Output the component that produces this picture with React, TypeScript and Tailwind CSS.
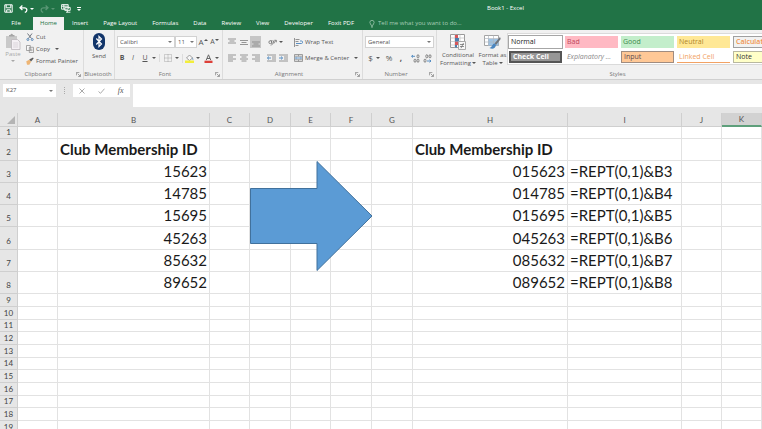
import type { ReactNode } from 'react';
import clsx from 'clsx';

const tabs = ['File', 'Home', 'Insert', 'Page Layout', 'Formulas', 'Data', 'Review', 'View', 'Developer', 'Foxit PDF'];

const cellStyles = [
  { label: 'Normal', className: 'bg-white text-[#222] outline outline-[#a6a6a6]' },
  { label: 'Bad', className: 'bg-[#ffb9c3] text-[#c0485a]' },
  { label: 'Good', className: 'bg-[#c3eecb] text-[#3f8a4c]' },
  { label: 'Neutral', className: 'bg-[#ffe896] text-[#b0852a]' },
  { label: 'Calculation', className: 'bg-[#f2f2f2] text-[#f0924a] border border-[#a0a0a0] font-semibold' },
  { label: 'Check Cell', className: 'bg-[#969696] text-white border-2 border-double border-[#555] font-bold' },
  { label: 'Explanatory ...', className: 'bg-white text-[#8a8a8a] italic' },
  { label: 'Input', className: 'bg-[#ffc896] text-[#5b4a50] border border-[#a08c80]' },
  { label: 'Linked Cell', className: 'bg-white text-[#f2a264] border-b border-[#f2a264]' },
  { label: 'Note', className: 'bg-[#ffffc8] text-[#333] border border-[#b8b8a0]' },
];

const columns = [
  { name: 'A', width: 40 },
  { name: 'B', width: 152 },
  { name: 'C', width: 40 },
  { name: 'D', width: 41 },
  { name: 'E', width: 40 },
  { name: 'F', width: 41 },
  { name: 'G', width: 41 },
  { name: 'H', width: 155 },
  { name: 'I', width: 114 },
  { name: 'J', width: 40 },
  { name: 'K', width: undefined },
];

const rowHeights = [12, 22, 22, 22, 22, 23, 22, 22, 13, 13, 12, 13, 13, 12, 13, 13, 12, 13, 13];

const cells: Record<string, string> = {
  B2: 'Club Membership ID',
  H2: 'Club Membership ID',
};

['15623', '14785', '15695', '45263', '85632', '89652'].forEach((id, i) => {
  const row = i + 3;
  cells[`B${row}`] = id;
  cells[`H${row}`] = `0${id}`;
  cells[`I${row}`] = `=REPT(0,1)&B${row}`;
});

const Caret = ({ className }: { className?: string }) => (
  <svg viewBox="0 0 4 2" className={clsx('h-[2px] w-[4px] shrink-0', className)} fill="currentColor">
    <path d="M0 0h4L2 2z" />
  </svg>
);

const Launcher = () => (
  <svg viewBox="0 0 6 6" className="size-[5px]" fill="none" stroke="#777" strokeWidth="0.8">
    <path d="M.5 4V.5H4M2 2l3 3M5.4 2.6v2.8H2.6" />
  </svg>
);

const SaveIcon = () => (
  <svg viewBox="0 0 9 9" className="size-[9px]" fill="none" stroke="white">
    <path d="M.8.8h7.4v7.4H.8zM2.2.8v3h4.6v-3M2.7 8.2V5.8h3.6v2.4" />
  </svg>
);

const UndoIcon = ({ className }: { className?: string }) => (
  <svg viewBox="0 0 9 8" className={clsx('h-[8px] w-[9px]', className)} fill="none" stroke="white" strokeWidth="1.3">
    <path d="M3.4.6 1 2.8 3.4 5M1 2.8h4.4c3.2 0 3.2 4 .4 4.6" />
  </svg>
);

const TouchIcon = () => (
  <svg viewBox="0 0 10 9" className="h-[9px] w-[10px]" fill="none" stroke="white" strokeWidth="0.9">
    <path d="M.6.6h6.6v4.6H.6zM.6 2.2h6.6M2.8.6v4.6M3.8 3.4h5.4v3H3.8zM5 8.2h4.4M6.4 6.4v1.8" />
  </svg>
);

const BulbIcon = () => (
  <svg viewBox="0 0 6 9" className="h-[8px] w-[6px]" fill="none" stroke="#a9cdb8" strokeWidth="0.8">
    <path d="M2 6C2 4.8.6 4.3.6 2.8a2.4 2.4 0 0 1 4.8 0C5.4 4.3 4 4.8 4 6zM2 7.2h2M2.3 8.3h1.4" />
  </svg>
);

const PasteIcon = () => (
  <svg viewBox="0 0 16 17" className="h-[17px] w-[16px]">
    <path d="M1 3h11v12H1z" fill="#c9c9c9" />
    <path d="M4 3.5V2h1.5a1.2 1.2 0 0 1 2.4 0H9.500v1.500z" fill="#a5a5a5" />
    <path d="M6.500 6.500h6l2.500 2.500v7.500H6.500z" fill="#f4f0f4" stroke="#bdb7bd" strokeWidth="0.8" />
    <path d="M8.200 10h5M8.200 12h5M8.200 14h5" stroke="#d0cad0" strokeWidth="0.7" />
  </svg>
);

const CutIcon = () => (
  <svg viewBox="0 0 8 8" className="size-[8px]" fill="none" strokeWidth="1">
    <path d="M1.500.5l4 5M6 .5l-3.600 5" stroke="#707780" />
    <circle cx="1.900" cy="6.500" r="1" stroke="#5b8ab8" />
    <circle cx="6.200" cy="6.500" r="1" stroke="#5b8ab8" />
  </svg>
);

const CopyIcon = () => (
  <svg viewBox="0 0 8 8" className="size-[8px]" fill="#f8f8f8" stroke="#909090" strokeWidth="0.8">
    <path d="M.5.5h3.800v5H.5zM3.300 2.300h4.200v5.200H3.300zM4.300 4.200h2.200M4.300 5.700h2.200" />
  </svg>
);

const BrushIcon = () => (
  <svg viewBox="0 0 8 8" className="size-[8px]">
    <path d="M.3 4.200 3.300 2.800 5 4.800 3.300 7.700H1z" fill="#eeb574" />
    <path d="M3.200 2.600 7 .6l.6.8-2.500 3.200z" fill="#5a5a5a" />
  </svg>
);

const BluetoothIcon = () => (
  <svg viewBox="0 0 12 17" className="h-[17px] w-[12px]">
    <rect width="12" height="17" rx="6" fill="#12356a" />
    <path d="M3.300 5.500 8.500 11 6 13.600V3.400L8.500 6l-5.200 5.500" fill="none" stroke="white" strokeWidth="1.200" />
  </svg>
);

const BorderIcon = () => (
  <svg viewBox="0 0 8 8" className="size-[8px]" fill="none" stroke="#999" strokeWidth="0.8" strokeDasharray="1 1">
    <path d="M.5.5h7v7h-7zM4 .5v7M.5 4h7" />
  </svg>
);

const FillIcon = () => (
  <svg viewBox="0 0 9 9" className="size-[9px]">
    <path d="M1.500 4 4.500 1l3 3-3 2.500z" fill="#f7f7f7" stroke="#888" strokeWidth="0.800" />
    <path d="M7.500 3.500c1 1.200 1 2.500.5 2.500s-.8-1-.5-2.500z" fill="#5484b4" />
    <path d="M0 6.500h9V9H0z" fill="#f3ee3c" />
  </svg>
);

const FontColorIcon = () => (
  <svg viewBox="0 0 9 9" className="size-[9px]">
    <path d="M2.200 6.200 4.500.8l2.300 5.400M3 4.500h3" fill="none" stroke="#666" strokeWidth="1" />
    <path d="M.5 6.700h8V9h-8z" fill="#dd3f38" />
  </svg>
);

// three text lines, pushed to the top, middle or bottom of the icon
const VAlignIcon = ({ y }: { y: number }) => (
  <svg viewBox="0 0 8 9" className="h-[9px] w-[8px]" stroke="#8a8a8a" strokeWidth="0.9">
    <path d={`M0 ${y}h8M1.500 ${y + 2}h5M0 ${y + 4}h8`} />
  </svg>
);

const HAlignIcon = ({ start }: { start: number }) => (
  <svg viewBox="0 0 8 8" className="size-[8px]" stroke="#8a8a8a" strokeWidth="0.9">
    <path d={`M0 1h8M${start} 3h5M0 5h8M${start} 7h5`} />
  </svg>
);

const IndentIcon = ({ flip }: { flip?: boolean }) => (
  <svg viewBox="0 0 9 8" className="h-[8px] w-[9px]" fill="none" strokeWidth="0.9">
    <path d="M0 1h9M5 3h4M5 5h4M0 7h9" stroke="#8a8a8a" />
    <path d={flip ? 'M0 4h3.500M2 2.500 3.600 4 2 5.500' : 'M4 4H.5M2 2.500.4 4 2 5.500'} stroke="#4a86c0" />
  </svg>
);

const OrientationIcon = () => (
  <svg viewBox="0 0 9 8" className="h-[8px] w-[9px]" fill="none" stroke="#777" strokeWidth="0.9">
    <circle cx="2.400" cy="4.200" r="1.500" />
    <path d="M4 5.700 3 2M4.800 2.200l1.500 3M3 7.500l5-5M6.300 2.300H8.300v2" />
  </svg>
);

const WrapIcon = () => (
  <svg viewBox="0 0 9 9" className="size-[9px]" fill="none" strokeWidth="0.9">
    <path d="M.5 0v9M1.500 1.500h4M1.500 3.500h3M1.500 7.500h3" stroke="#888" />
    <path d="M2 5.500h5.500c1.500 0 1.500-2.500 0-2.500H6" stroke="#4a86c0" />
  </svg>
);

const MergeIcon = () => (
  <svg viewBox="0 0 9 8" className="h-[8px] w-[9px]" fill="none" strokeWidth="0.8">
    <path d="M.5.5h8v7h-8zM.5 2.200h8M.5 5.800h8M4.500.5v1.700M4.500 5.800v1.700" stroke="#8a8a8a" />
    <path d="M1.500 4h6M2.500 3.200 1.500 4l1 .8M6.500 3.200l1 .8-1 .8" stroke="#4a86c0" />
  </svg>
);

const DecimalIcon = ({ decrease }: { decrease?: boolean }) => (
  <svg viewBox="0 0 9 9" className="size-[9px]" fill="none" strokeWidth="0.9">
    <path d={decrease ? 'M4 7h4M6.500 5.700 8 7 6.500 8.300' : 'M4 2.300H.6M2 1 .6 2.300 2 3.600'} stroke="#4a86c0" />
    <ellipse cx="7" cy="2.300" rx="1" ry="1.600" stroke="#777" />
    {decrease ? <ellipse cx="3.800" cy="2.300" rx="1" ry="1.600" stroke="#777" /> : <ellipse cx="7" cy="6.700" rx="1" ry="1.600" stroke="#777" />}
    <ellipse cx={decrease ? 2 : 4} cy="6.700" rx="1" ry="1.600" stroke="#777" />
  </svg>
);

const ConditionalIcon = () => (
  <svg viewBox="0 0 17 16" className="h-[16px] w-[17px]">
    <path d="M.5.5h14v13H.5z" fill="white" stroke="#9a9a9a" />
    <path d="M.5 4h14M.5 7.500h14M.5 11h14M5 .5v13M10 .5v13" stroke="#c0c0c0" strokeWidth="0.700" />
    <path d="M5 1h3v3H5zM5 7.500h5V11H5z" fill="#d8575a" />
    <path d="M5 4h4v3.500H5zM5 11h2v2.500H5z" fill="#4d7fae" />
    <path d="M8.500 7.500h7v8h-7z" fill="#f8f8f8" stroke="#aaa" />
    <path d="M10 10.500h4M10 12.500h4M13.500 9 11 14.200" stroke="#666" strokeWidth="0.700" />
  </svg>
);

const FormatTableIcon = () => (
  <svg viewBox="0 0 17 16" className="h-[16px] w-[17px]">
    <path d="M.5 1.500h14v10H.5z" fill="white" stroke="#a5a5a5" />
    <path d="M4 5h10.500v6.500H4z" fill="#9ec3e4" />
    <path d="M.5 4.500h14M.5 8h14M4.500 1.500v10M9.500 1.500v10" stroke="#b0b8c0" strokeWidth="0.700" />
    <path d="M16 3 10.500 9.500l1.500 1.500 4.700-6z" fill="#70757c" />
    <path d="M10.500 9.500c-2.500.5-2 3.500-5 4.500 3 1.500 6 .5 6.500-3z" fill="#4a86c0" />
  </svg>
);

const IconButton = ({ label, className, children }: { label: string; className?: string; children: ReactNode }) => (
  <button type="button" aria-label={label} className={clsx('flex shrink-0 items-center justify-center', className)}>
    {children}
  </button>
);

interface GroupProps {
  title: string;
  className?: string;
  launcher?: boolean;
  children: ReactNode;
}

const Group = ({ title, className, launcher, children }: GroupProps) => (
  <section className={clsx('flex flex-col', className)}>
    <div className="flex flex-1 border-r border-[#dcdcdc]">{children}</div>
    <div className="flex h-[10px] items-center border-r border-[#dcdcdc] pr-[2px] text-[#777]">
      <h2 className="flex-1 whitespace-nowrap text-center">{title}</h2>
      {launcher && (
        <button type="button" aria-label={`${title} settings`}>
          <Launcher />
        </button>
      )}
    </div>
  </section>
);

const Picker = ({ label, value, className }: { label: string; value: string; className: string }) => (
  <div className={clsx('relative h-[12px] border border-[#d2d2d2] bg-white', className)}>
    <select aria-label={label} className="block h-full w-full appearance-none bg-transparent pl-[2px] leading-none outline-none">
      <option>{value}</option>
    </select>
    <Caret className="pointer-events-none absolute right-[2px] top-[4px] text-[#777]" />
  </div>
);

const TitleBar = () => (
  <div className="flex h-[17px] items-center text-white">
    <div className="flex h-[12px] w-[88px] items-center pl-[4px]">
      <IconButton label="Save" className="mr-[6px]"><SaveIcon /></IconButton>
      <IconButton label="Undo" className="mr-[6px] gap-[2px]"><UndoIcon /><Caret /></IconButton>
      <IconButton label="Redo" className="mr-[6px] gap-[2px] opacity-25"><UndoIcon className="-scale-x-100" /><Caret /></IconButton>
      <IconButton label="Touch mode" className="mr-[6px]"><TouchIcon /></IconButton>
      <IconButton label="Customize toolbar" className="flex-col gap-px">
        <span className="h-px w-[4px] bg-white" />
        <Caret />
      </IconButton>
    </div>
    <h1 className="flex-1 pl-[399px] text-[6px]">Book1 - Excel</h1>
  </div>
);

const TabBar = () => (
  <nav className="flex h-[13px] items-stretch gap-px text-white">
    {tabs.map(tab => (
      <button
        key={tab}
        type="button"
        className={clsx(
          'shrink-0 whitespace-nowrap px-[7px] text-[6px]',
          tab === 'File' && 'w-[32px]',
          tab === 'Home' && 'bg-[#f1f1f1] text-[#217346]',
        )}
      >
        {tab}
      </button>
    ))}
    <label className="ml-[7px] flex items-center gap-[3px]">
      <BulbIcon />
      <input aria-label="Tell me" placeholder="Tell me what you want to do..." className="w-[120px] bg-transparent text-[6px] outline-none placeholder:text-[#a9cdb8]" />
    </label>
  </nav>
);

const Ribbon = () => (
  <div className="flex h-[50px] shrink-0 overflow-hidden border-b border-[#d0d0d0] bg-[#f1f1f1] text-[6px] leading-[8px] text-[#555]">
    <Group title="Clipboard" launcher className="w-[84px] shrink-0">
      <button type="button" className="flex w-[26px] flex-col items-center pt-[3px] text-[#a8a8a8]">
        <PasteIcon />
        Paste
        <Caret className="mt-[2px]" />
      </button>
      <div className="flex flex-col gap-[4px] pt-[3px]">
        <button type="button" className="flex items-center gap-[2px]"><CutIcon />Cut</button>
        <button type="button" className="flex items-center gap-[2px]"><CopyIcon />Copy<Caret className="ml-[3px]" /></button>
        <button type="button" className="flex items-center gap-[2px] whitespace-nowrap"><BrushIcon />Format Painter</button>
      </div>
    </Group>

    <Group title="Bluetooth" className="w-[31px] shrink-0">
      <button type="button" className="flex flex-1 flex-col items-center gap-[2px] pt-[3px]">
        <BluetoothIcon />
        Send
      </button>
    </Group>

    <Group title="Font" launcher className="w-[108px] shrink-0">
      <div className="flex flex-col gap-[4px] pl-[2px] pt-[6px]">
        <div className="flex items-center">
          <Picker label="Font" value="Calibri" className="w-[58px]" />
          <Picker label="Font size" value="11" className="w-[22px]" />
          <IconButton label="Increase font size" className="w-[12px] text-[8px]">A<Caret className="mb-[4px] -scale-y-100" /></IconButton>
          <IconButton label="Decrease font size" className="w-[11px] text-[7px]">A<Caret className="mb-[4px]" /></IconButton>
        </div>
        <div className="flex h-[12px] items-center text-[7px]">
          <IconButton label="Bold" className="w-[10px] font-bold">B</IconButton>
          <IconButton label="Italic" className="w-[12px] italic">I</IconButton>
          <IconButton label="Underline" className="w-[20px] gap-[4px] underline">U<Caret /></IconButton>
          <IconButton label="Borders" className="w-[23px] gap-[3px] border-l border-[#dcdcdc]"><BorderIcon /><Caret /></IconButton>
          <IconButton label="Fill color" className="w-[20px] gap-[2px] border-l border-[#dcdcdc]"><FillIcon /><Caret /></IconButton>
          <IconButton label="Font color" className="w-[18px] gap-[2px]"><FontColorIcon /><Caret /></IconButton>
        </div>
      </div>
    </Group>

    <Group title="Alignment" launcher className="w-[140px] shrink-0">
      <div className="flex flex-col gap-[4px] pl-[3px] pt-[6px]">
        <div className="flex h-[12px] items-center">
          <IconButton label="Top align" className="w-[12px]"><VAlignIcon y={1} /></IconButton>
          <IconButton label="Middle align" className="w-[12px]"><VAlignIcon y={2.5} /></IconButton>
          <IconButton label="Bottom align" className="h-[12px] w-[11px] bg-[#c6c6c6]"><VAlignIcon y={4} /></IconButton>
          <IconButton label="Orientation" className="w-[28px] gap-[2px]"><OrientationIcon /><Caret /></IconButton>
          <button type="button" className="ml-[5px] flex items-center gap-[2px] whitespace-nowrap"><WrapIcon />Wrap Text</button>
        </div>
        <div className="flex h-[12px] items-center">
          <IconButton label="Align left" className="w-[12px]"><HAlignIcon start={0} /></IconButton>
          <IconButton label="Center" className="w-[12px]"><HAlignIcon start={1.5} /></IconButton>
          <IconButton label="Align right" className="w-[12px]"><HAlignIcon start={3} /></IconButton>
          <IconButton label="Decrease indent" className="ml-[3px] w-[12px]"><IndentIcon /></IconButton>
          <IconButton label="Increase indent" className="w-[12px]"><IndentIcon flip /></IconButton>
          <button type="button" className="ml-[5px] flex items-center gap-[2px] whitespace-nowrap"><MergeIcon />Merge &amp; Center<Caret className="ml-[3px]" /></button>
        </div>
      </div>
    </Group>

    <Group title="Number" launcher className="w-[74px] shrink-0">
      <div className="flex flex-col gap-[4px] pl-[2px] pt-[6px]">
        <Picker label="Number format" value="General" className="w-[69px]" />
        <div className="flex h-[12px] items-center text-[8px]">
          <IconButton label="Accounting format" className="w-[18px] gap-[3px]">$<Caret /></IconButton>
          <IconButton label="Percent" className="w-[12px]">%</IconButton>
          <IconButton label="Comma" className="w-[12px] font-bold">,</IconButton>
          <IconButton label="Increase decimal" className="ml-[2px] w-[12px]"><DecimalIcon /></IconButton>
          <IconButton label="Decrease decimal" className="w-[12px]"><DecimalIcon decrease /></IconButton>
        </div>
      </div>
    </Group>

    <Group title="Styles" className="min-w-[364px] flex-1">
      <button type="button" className="flex w-[42px] shrink-0 flex-col items-center pt-[4px]">
        <ConditionalIcon />
        <span className="mt-[1px] block">Conditional</span>
        <span className="flex items-center gap-[1px]">Formatting<Caret /></span>
      </button>
      <button type="button" className="flex w-[27px] shrink-0 flex-col items-center pt-[4px]">
        <FormatTableIcon />
        <span className="mt-[1px] block whitespace-nowrap">Format as</span>
        <span className="flex items-center gap-[1px]">Table<Caret /></span>
      </button>
      <div className="ml-[1px] mt-[3px] grid h-[32px] grid-cols-[repeat(5,53px)] content-center gap-x-[3px] gap-y-[3px] border border-[#dadada] bg-white pl-[1px] text-[7px]">
        {cellStyles.map(({ label, className }) => (
          <button key={label} type="button" className={clsx('h-[12px] overflow-hidden whitespace-nowrap px-[2px] text-left leading-none', className)}>
            {label}
          </button>
        ))}
      </div>
    </Group>
  </div>
);

const FormulaBar = () => (
  <div className="flex h-[33px] shrink-0 items-start bg-[#e6e6e6] pt-[4px] text-[7px] text-[#555]">
    <div className="ml-[3px] flex h-[13px] w-[53px] items-center bg-white pr-[3px]">
      <input aria-label="Name box" defaultValue="K27" className="w-full min-w-0 bg-transparent pl-[3px] text-[6px] outline-none" />
      <Caret className="text-[#777]" />
    </div>
    <span className="mx-[8px] mt-[3px] h-[7px] border-l border-dotted border-[#aaa]" />
    <div className="flex h-[13px] w-[57px] items-center justify-around bg-white text-[#aaa]">
      <IconButton label="Cancel">
        <svg viewBox="0 0 6 6" className="size-[6px]" stroke="currentColor"><path d="M.5.5l5 5M5.500.5l-5 5" /></svg>
      </IconButton>
      <IconButton label="Enter">
        <svg viewBox="0 0 7 6" className="h-[6px] w-[7px]" fill="none" stroke="currentColor"><path d="M.5 3.500 2.500 5.300 6.500.7" /></svg>
      </IconButton>
      <IconButton label="Insert function" className="font-['Liberation_Serif'] text-[8px] italic text-[#555]">fx</IconButton>
    </div>
    <input aria-label="Formula" className="ml-[3px] h-[23px] min-w-0 flex-1 bg-white px-[4px] outline-none" />
  </div>
);

const Sheet = () => (
  <div className="relative flex-1 overflow-hidden bg-white">
    <table className="w-full table-fixed border-separate border-spacing-0 font-['Lato','Open_Sans',sans-serif] text-[15px] leading-none text-[#1a1a1a]">
      <colgroup>
        <col className="w-[18px]" />
        {columns.map(col => <col key={col.name} style={{ width: col.width }} />)}
      </colgroup>
      <thead>
        <tr className="h-[14px] bg-[#e6e6e6] text-[8px] text-[#555]">
          <td className="border-b border-r border-[#cfcfcf] p-0">
            <svg viewBox="0 0 8 8" className="ml-auto mr-[2px] size-[8px]" fill="#b4b4b4"><path d="M8 0v8H0z" /></svg>
          </td>
          {columns.map(({ name }) => (
            <th
              key={name}
              scope="col"
              className={clsx('border-b border-r p-0 font-normal', name === 'K' ? 'border-b-2 border-r-[#cfcfcf] border-b-[#5e9f7b] bg-[#d2d2d2]' : 'border-[#cfcfcf]')}
            >
              {name}
            </th>
          ))}
        </tr>
      </thead>
      <tbody>
        {rowHeights.map((height, i) => (
          <tr key={i} style={{ height }}>
            <th
              scope="row"
              className={clsx(
                'border-b border-r border-[#cfcfcf] bg-[#e6e6e6] p-0 text-center align-bottom text-[8px] font-normal leading-[11px] text-[#444]',
                height > 13 && 'pb-[2px]',
              )}
            >
              {i + 1}
            </th>
            {columns.map(({ name }) => (
              <td
                key={name}
                className={clsx(
                  'whitespace-nowrap border-b border-r border-[#e2e2e2] p-0 px-[2px]',
                  i === 1 && 'font-bold',
                  i > 1 && name !== 'I' && 'text-right',
                )}
              >
                {cells[`${name}${i + 1}`]}
              </td>
            ))}
          </tr>
        ))}
      </tbody>
    </table>

    {/* Block arrow floating over columns D to F */}
    <svg viewBox="0 0 124 112" className="absolute left-[249px] top-[47px] h-[112px] w-[124px]" fill="#5b9bd5" stroke="#41719c">
      <path d="M1.500 28.500h66.500V1.500l55 54.500-55 54.500V83.500H1.500z" />
    </svg>
  </div>
);

const App = () => (
  <div className="flex h-screen flex-col overflow-hidden bg-white font-['Open_Sans','Noto_Sans',sans-serif]">
    <header className="shrink-0 bg-[#217346]">
      <TitleBar />
      <TabBar />
    </header>
    <Ribbon />
    <FormulaBar />
    <Sheet />
  </div>
);

export default App;
